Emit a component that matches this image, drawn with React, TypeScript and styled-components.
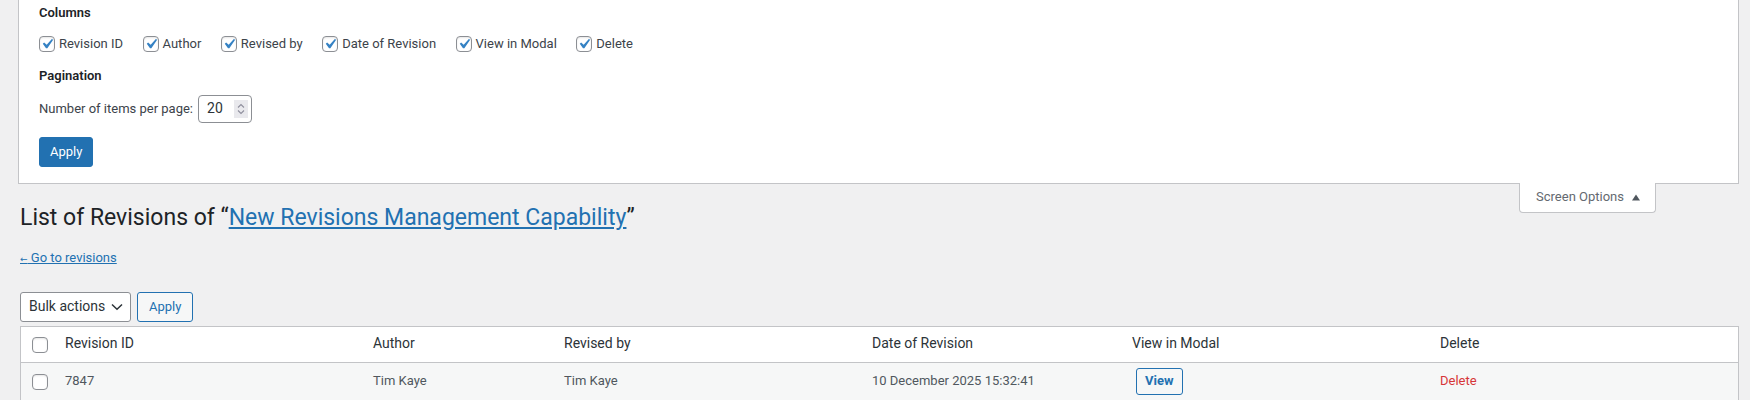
import styled, { createGlobalStyle } from "styled-components";

const GlobalStyle = createGlobalStyle`
  body {
    margin: 0;
    background: #f0f0f1;
    font-family: Roboto, "Liberation Sans", sans-serif;
    font-size: 13px;
    line-height: 1.4;
    color: #3c434a;
  }
`;

const Page = styled.div`
  padding: 0 11px 0 18px;
`;

const OptionsPanel = styled.div`
  background: #fff;
  border: 1px solid #c3c4c7;
  border-top: 0;
  padding: 4px 20px 16px;
`;

const Legend = styled.div<{ $gap?: number }>`
  margin-top: ${({ $gap }) => $gap ?? 0}px;
  font-weight: 600;
  line-height: 18px;
  color: #1d2327;
`;

const CheckRow = styled.div`
  display: flex;
  align-items: center;
  gap: 19.5px;
  height: 30px;
  margin-top: 7px;
`;

const CheckLabel = styled.label`
  display: inline-flex;
  align-items: center;
  gap: 4px;
  color: #3c434a;
`;

const Box = styled.span`
  display: block;
  flex: none;
  box-sizing: border-box;
  width: 16px;
  height: 16px;
  border: 1px solid #8c8f94;
  border-radius: 4px;
  background: #fff;
  box-shadow: inset 0 1px 2px rgba(0, 0, 0, 0.1);
  position: relative;

  svg {
    position: absolute;
    left: -3px;
    top: -3px;
  }
`;

const Checkbox = ({ checked }: { checked?: boolean }) => (
  <Box>
    {checked && (
      <svg width="20" height="20" viewBox="0 0 20 20">
        <path
          d="M14.83 4.89l1.34.94-5.81 8.38H9.02L5.78 9.670l1.34-1.25 2.57 2.4z"
          fill="#3582c4"
        />
      </svg>
    )}
  </Box>
);

const NumberRow = styled.div`
  display: flex;
  align-items: center;
  gap: 5px;
  margin-top: 10px;
  height: 28px;
`;

const NumberBox = styled.div`
  box-sizing: border-box;
  width: 54px;
  height: 28px;
  border: 1px solid #8c8f94;
  border-radius: 4px;
  background: #fff;
  display: flex;
  align-items: center;
  justify-content: space-between;
  padding: 0 3px 0 8px;
  font-size: 14px;
  color: #2c3338;
`;

const Spinner = styled.span`
  display: flex;
  width: 14px;
  height: 18px;
  background: #e9e9ed;
`;

const PrimaryButton = styled.button`
  display: block;
  margin-top: 14px;
  height: 30px;
  padding: 0 10px;
  font: inherit;
  font-size: 13px;
  color: #fff;
  background: #2271b1;
  border: 1px solid #2271b1;
  border-radius: 3px;
`;

const ScreenTab = styled.div`
  float: right;
  margin: -1px 83px 0 0;
  box-sizing: border-box;
  height: 30px;
  padding: 0 15px 0 16px;
  display: flex;
  align-items: center;
  gap: 8px;
  background: #fff;
  border: 1px solid #c3c4c7;
  border-top: 0;
  border-radius: 0 0 4px 4px;
  color: #646970;
`;

const Wrap = styled.div`
  margin: 10px 0 0 2px;
`;

const Title = styled.h1`
  margin: 0;
  padding: 9px 0 4px;
  font-size: 23px;
  font-weight: 400;
  line-height: 1.3;
  color: #1d2327;
`;

const Link = styled.a`
  color: #2271b1;
  text-decoration: underline;
`;

const BackLink = styled.p`
  margin: 12px 0 0;
  line-height: 17px;
`;

const Arrow = styled.span`
  font-family: "DejaVu Sans", sans-serif;
  font-size: 9px;
  line-height: 0;
`;

const Tablenav = styled.div`
  display: flex;
  gap: 6px;
  height: 30px;
  margin-top: 26px;
`;

const SelectBox = styled.div`
  box-sizing: border-box;
  width: 111px;
  height: 30px;
  padding: 0 7px 0 8px;
  display: flex;
  align-items: center;
  justify-content: space-between;
  background: #fff;
  border: 1px solid #8c8f94;
  border-radius: 3px;
  font-size: 14px;
  color: #2c3338;
`;

const SecondaryButton = styled.button<{ $bold?: boolean }>`
  height: ${({ $bold }) => ($bold ? 27 : 30)}px;
  padding: 0 ${({ $bold }) => ($bold ? 8 : 11)}px;
  font: inherit;
  font-size: 13px;
  font-weight: ${({ $bold }) => ($bold ? 700 : 400)};
  color: #2271b1;
  background: #f6f7f7;
  border: 1px solid #2271b1;
  border-radius: 3px;
`;

const Table = styled.table`
  width: 100%;
  margin-top: 4px;
  table-layout: fixed;
  border-spacing: 0;
  border: 1px solid #c3c4c7;
  background: #fff;
`;

const Th = styled.th`
  padding: 7px 8px 9px;
  line-height: 19px;
  font-size: 14px;
  font-weight: 400;
  text-align: left;
  color: #2c3338;
  border-bottom: 1px solid #c3c4c7;
`;

const CheckCell = styled.td<{ $head?: boolean }>`
  padding: ${({ $head }) => ($head ? "2px 0 0 11px" : "1px 0 0 11px")};
  vertical-align: middle;
  background: ${({ $head }) => ($head ? "#fff" : "#f6f7f7")};
  border-bottom: ${({ $head }) => ($head ? "1px solid #c3c4c7" : "0")};
`;

const Td = styled.td`
  padding: 5px 8px;
  vertical-align: middle;
  background: #f6f7f7;
  color: #50575e;
`;

const DeleteLink = styled.a`
  color: #d63638;
  text-decoration: none;
`;

const columnOptions = [
  "Revision ID",
  "Author",
  "Revised by",
  "Date of Revision",
  "View in Modal",
  "Delete",
];

const colWidths = [36, 308, 191, 308, 260, 308];

export default function App() {
  return (
    <>
      <GlobalStyle />
      <Page>
        <OptionsPanel>
          <Legend>Columns</Legend>
          <CheckRow>
            {columnOptions.map((name) => (
              <CheckLabel key={name}>
                <Checkbox checked />
                {name}
              </CheckLabel>
            ))}
          </CheckRow>
          <Legend $gap={8}>Pagination</Legend>
          <NumberRow>
            <span>Number of items per page:</span>
            <NumberBox>
              20
              <Spinner>
                <svg width="14" height="18" viewBox="0 0 14 18">
                  <path
                    d="M4 7.5L7 4.5L10 7.5M4 10.5L7 13.5L10 10.5"
                    fill="none"
                    stroke="#8f8f9d"
                    strokeWidth="1.1"
                  />
                </svg>
              </Spinner>
            </NumberBox>
          </NumberRow>
          <PrimaryButton>Apply</PrimaryButton>
        </OptionsPanel>

        <ScreenTab>
          Screen Options
          <svg width="8" height="7" viewBox="0 0 8 7">
            <path d="M4 0.5L8 6.5H0z" fill="#50575e" />
          </svg>
        </ScreenTab>

        <Wrap>
          <Title>
            List of Revisions of “<Link href="#">New Revisions Management Capability</Link>”
          </Title>
          <BackLink>
            <Link href="#">
              <Arrow>←</Arrow> Go to revisions
            </Link>
          </BackLink>

          <Tablenav>
            <SelectBox>
              Bulk actions
              <svg width="12" height="8" viewBox="0 0 12 8">
                <path d="M1 1.5L6 6.3L11 1.5" fill="none" stroke="#2c3338" strokeWidth="1.5" />
              </svg>
            </SelectBox>
            <SecondaryButton>Apply</SecondaryButton>
          </Tablenav>

          <Table>
            <colgroup>
              {colWidths.map((w, i) => (
                <col key={i} style={{ width: w }} />
              ))}
              <col />
            </colgroup>
            <thead>
              <tr>
                <CheckCell as="th" $head>
                  <Checkbox />
                </CheckCell>
                {columnOptions.map((name) => (
                  <Th key={name}>{name}</Th>
                ))}
              </tr>
            </thead>
            <tbody>
              <tr>
                <CheckCell>
                  <Checkbox />
                </CheckCell>
                <Td>7847</Td>
                <Td>Tim Kaye</Td>
                <Td>Tim Kaye</Td>
                <Td>10 December 2025 15:32:41</Td>
                <Td>
                  <SecondaryButton $bold style={{ marginLeft: 4 }}>
                    View
                  </SecondaryButton>
                </Td>
                <Td>
                  <DeleteLink href="#">Delete</DeleteLink>
                </Td>
              </tr>
            </tbody>
          </Table>
        </Wrap>
      </Page>
    </>
  );
}
